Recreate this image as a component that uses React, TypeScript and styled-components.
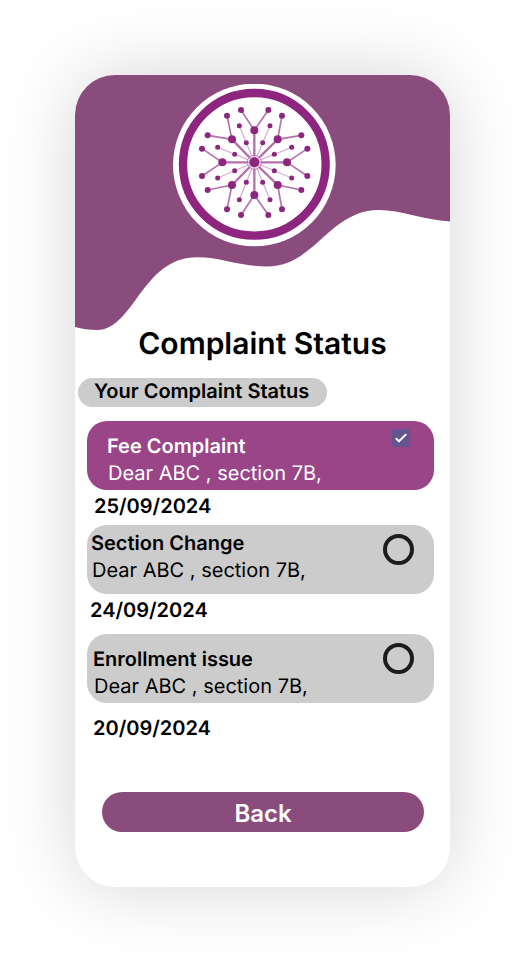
import React, { useState } from "react";
import styled, { createGlobalStyle } from "styled-components";

const plum = "#8a4c7d";
const magenta = "#994587";
const emblem = "#8e257f";
const silver = "#cccccc";

const GlobalStyle = createGlobalStyle`
  *, *::before, *::after { box-sizing: border-box; }
  body {
    margin: 0;
    background: #ffffff;
    color: #000000;
    font-family: Inter, "Liberation Sans", sans-serif;
    text-rendering: geometricPrecision;
  }
`;

const Page = styled.div`
  padding: 75px;
`;

const Screen = styled.main`
  display: flex;
  flex-direction: column;
  overflow: hidden;
  padding-bottom: 55px;
  border-radius: 40px;
  background: #ffffff;
  box-shadow: 0 0 75px rgba(0, 0, 0, 0.17);
`;

const Header = styled.header`
  display: grid;
  justify-items: center;
  > * { grid-area: 1 / 1; }
`;

const Wave = styled.svg`
  display: block;
  width: 100%;
  height: 255px;
`;

const LogoSlot = styled.div`
  padding: 9px 16px 0 0;
`;

const LogoArt = styled.svg`
  display: block;
  width: 163px;
  height: 163px;
`;

const Title = styled.h1`
  margin: 0;
  font-size: 30px;
  line-height: 28px;
  font-weight: 600;
  text-align: center;
`;

const Pill = styled.h2`
  align-self: flex-start;
  margin: 20px 0 14px 3px;
  padding: 1px 18px 4px 16px;
  border-radius: 16px;
  background: ${silver};
  font-size: 20px;
  line-height: 24px;
  font-weight: 600;
`;

const List = styled.ul`
  margin: 0;
  padding: 0 16px 0 12px;
  list-style: none;
`;

const Complaint = styled.label<{ $accent: boolean; $top: number; $inset: number }>`
  display: flex;
  justify-content: space-between;
  align-items: flex-start;
  min-height: 69px;
  padding: 0 20px 0 ${(p) => p.$inset}px;
  border-radius: 20px;
  background: ${(p) => (p.$accent ? magenta : silver)};
  color: ${(p) => (p.$accent ? "#ffffff" : "#000000")};
  font-size: 20px;
  line-height: 24px;
  cursor: pointer;

  > :first-child { padding-top: ${(p) => p.$top}px; }
`;

const Copy = styled.span`
  display: flex;
  flex-direction: column;
  gap: 3px;
`;

const Subject = styled.span`
  font-weight: 600;
`;

const Message = styled.span`
  padding-left: 1px;
  font-weight: 400;
`;

const Tick = styled.span`
  display: grid;
  margin: 8px 4px 0 0;
  > * { grid-area: 1 / 1; }
`;

const TickInput = styled.input`
  appearance: none;
  width: 18px;
  height: 18px;
  margin: 0;
  border-radius: 2px;
  background: #65558f;
  cursor: pointer;

  & + svg { visibility: hidden; pointer-events: none; }
  &:checked + svg { visibility: visible; }
`;

const Radio = styled.input`
  appearance: none;
  width: 31px;
  height: 31px;
  margin: 9px 0 0;
  border: 4px solid #1d1b20;
  border-radius: 50%;
  cursor: pointer;

  &:checked { background: radial-gradient(#1d1b20 7px, transparent 8px); }
`;

const DateLine = styled.time<{ $above: number; $below: number; $inset: number }>`
  display: block;
  padding: ${(p) => `${p.$above}px 0 ${p.$below}px ${p.$inset}px`};
  font-size: 20px;
  line-height: 24px;
  font-weight: 600;
`;

const BackButton = styled.button`
  height: 40px;
  margin: 40px 26px 0 27px;
  padding: 4px 0 0;
  border: 0;
  border-radius: 20px;
  background: ${plum};
  color: #ffffff;
  font: 600 24px/28px Inter, "Liberation Sans", sans-serif;
  cursor: pointer;
`;

type Point = [number, number];

const hub: Point = [268, 262];

const branches: { node: Point; tips: Point[] }[] = [
  { node: [268, 166], tips: [[228, 105], [310, 105]] },
  { node: [338, 193], tips: [[351, 122], [409, 181]] },
  { node: [366, 262], tips: [[427, 221], [427, 303]] },
  { node: [338, 330], tips: [[409, 345], [351, 403]] },
  { node: [268, 360], tips: [[310, 420], [228, 420]] },
  { node: [201, 330], tips: [[186, 403], [128, 345]] },
  { node: [172, 262], tips: [[111, 303], [111, 221]] },
  { node: [201, 193], tips: [[128, 181], [186, 122]] },
];

const twigs: Point[][] = [
  [[244, 203], [223, 152]],
  [[293, 203], [315, 152]],
  [[328, 238], [380, 217]],
  [[328, 287], [380, 309]],
  [[293, 322], [315, 374]],
  [[244, 322], [223, 374]],
  [[209, 287], [158, 309]],
  [[209, 238], [158, 217]],
];

const segment = (a: Point, b: Point) => `M${a[0]} ${a[1]}L${b[0]} ${b[1]}`;

function Logo() {
  return (
    <LogoArt viewBox="24 27 489 489" role="img" aria-label="Institute emblem">
      <circle cx="268" cy="270" r="244" fill="#ffffff" />
      <circle cx="268" cy="268" r="214" fill="none" stroke={emblem} strokeWidth="25" />
      <g fill="none" stroke={emblem}>
        <path
          d={branches.map((b) => segment(hub, b.node)).join("")}
          strokeWidth="7"
          opacity="0.65"
        />
        <path
          d={branches.flatMap((b) => b.tips.map((t) => segment(b.node, t))).join("")}
          strokeWidth="5"
          opacity="0.65"
        />
        <path
          d={twigs.map((t) => segment(hub, t[1])).join("")}
          strokeWidth="4"
          opacity="0.35"
        />
      </g>
      <circle cx={hub[0]} cy={hub[1]} r="22" fill="#ffffff" opacity="0.5" />
      <circle cx={hub[0]} cy={hub[1]} r="21" fill="none" stroke={emblem} strokeWidth="3" opacity="0.5" />
      <g fill={emblem}>
        <circle cx={hub[0]} cy={hub[1]} r="15" />
        {branches.map((b) => (
          <circle key={b.node.join()} cx={b.node[0]} cy={b.node[1]} r="12" />
        ))}
        {branches.flatMap((b) => b.tips).map((t) => (
          <circle key={t.join()} cx={t[0]} cy={t[1]} r="9" />
        ))}
        {twigs.flat().map((t) => (
          <circle key={t.join()} cx={t[0]} cy={t[1]} r="7.5" />
        ))}
      </g>
    </LogoArt>
  );
}

const complaints = [
  { subject: "Fee Complaint", date: "25/09/2024", iso: "2024-09-25", resolved: true, top: 13, inset: 20, above: 4, below: 7, dateInset: 7 },
  { subject: "Section Change", date: "24/09/2024", iso: "2024-09-24", resolved: false, top: 6, inset: 4, above: 4, below: 12, dateInset: 3 },
  { subject: "Enrollment issue", date: "20/09/2024", iso: "2024-09-20", resolved: false, top: 13, inset: 6, above: 13, below: 12, dateInset: 6 },
];

export default function App() {
  const [ticked, setTicked] = useState(true);
  const [selected, setSelected] = useState("");

  return (
    <>
      <GlobalStyle />
      <Page>
        <Screen>
          <Header>
            <Wave viewBox="0 0 375 255" preserveAspectRatio="none" aria-hidden="true">
              <path
                fill={plum}
                d="M0 0H375V146.5C349 145 326 135 304 135C254 135 240 191.5 192 191.5C163 191.5 148 182.3 122 182.3C67 182.3 59 255 22 255C14 255 7 254 0 252Z"
              />
            </Wave>
            <LogoSlot>
              <Logo />
            </LogoSlot>
          </Header>
          <Title>Complaint Status</Title>
          <Pill>Your Complaint Status</Pill>
          <List>
            {complaints.map((c) => (
              <li key={c.iso}>
                <Complaint $accent={c.resolved} $top={c.top} $inset={c.inset}>
                  <Copy>
                    <Subject>{c.subject}</Subject>
                    <Message>Dear ABC , section 7B,</Message>
                  </Copy>
                  {c.resolved ? (
                    <Tick>
                      <TickInput
                        type="checkbox"
                        checked={ticked}
                        onChange={(e) => setTicked(e.target.checked)}
                      />
                      <svg width="18" height="18" viewBox="0 0 18 18" aria-hidden="true">
                        <path d="M3.8 9.2L7 12.3L14.2 5.1" fill="none" stroke="#ffffff" strokeWidth="2" />
                      </svg>
                    </Tick>
                  ) : (
                    <Radio
                      type="radio"
                      name="complaint"
                      checked={selected === c.iso}
                      onChange={() => setSelected(c.iso)}
                    />
                  )}
                </Complaint>
                <DateLine dateTime={c.iso} $above={c.above} $below={c.below} $inset={c.dateInset}>
                  {c.date}
                </DateLine>
              </li>
            ))}
          </List>
          <BackButton type="button">Back</BackButton>
        </Screen>
      </Page>
    </>
  );
}
